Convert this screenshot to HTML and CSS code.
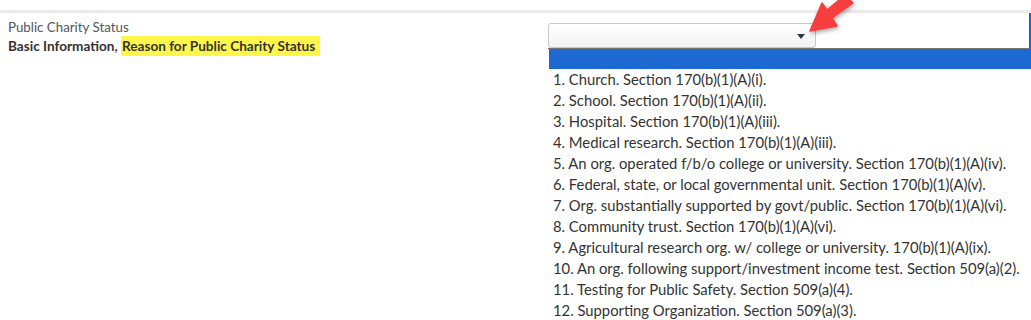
FILE: index.html
```html
<!DOCTYPE html>
<html lang="en">
<head>
    <meta charset="UTF-8">
    <title>Public Charity Status</title>
    <link rel="stylesheet" href="styles.css">
</head>
<body>
    <div class="topbar"></div>
    <div class="field">
        <div class="label">
            <div class="name">Public Charity Status</div>
            <div class="path">Basic Information, <span class="hl">Reason for Public Charity Status</span></div>
        </div>
        <div class="control">
            <div class="select"><span class="caret"></span></div>
            <svg class="pointer" width="60" height="45" viewBox="0 0 60 45">
                <path d="M10 31 L22 3 L27 10 L45 -5 L53 3 L32 18 L37 26 Z" fill="#f73e3e" stroke="#f73e3e" stroke-width="1.5" stroke-linejoin="round"/>
            </svg>
        </div>
    </div>
    <div class="dropdown">
        <div class="selected"></div>
        <ul class="options">
            <li>1. Church. Section 170(b)(1)(A)(i).</li>
            <li>2. School. Section 170(b)(1)(A)(ii).</li>
            <li>3. Hospital. Section 170(b)(1)(A)(iii).</li>
            <li>4. Medical research. Section 170(b)(1)(A)(iii).</li>
            <li>5. An org. operated f/b/o college or university. Section 170(b)(1)(A)(iv).</li>
            <li>6. Federal, state, or local governmental unit. Section 170(b)(1)(A)(v).</li>
            <li>7. Org. substantially supported by govt/public. Section 170(b)(1)(A)(vi).</li>
            <li>8. Community trust. Section 170(b)(1)(A)(vi).</li>
            <li>9. Agricultural research org. w/ college or university. 170(b)(1)(A)(ix).</li>
            <li>10. An org. following support/investment income test. Section 509(a)(2).</li>
            <li>11. Testing for Public Safety. Section 509(a)(4).</li>
            <li>12. Supporting Organization. Section 509(a)(3).</li>
        </ul>
    </div>
</body>
</html>
```
FILE: styles.css
```css
body {
    margin: 0;
    font-family: "Source Sans Pro", Lato, "Open Sans", sans-serif;
    background-color: #fff;
    color: #333;
    overflow: hidden;
}
.topbar {
    height: 3px;
    margin-top: 10px;
    background-color: #ebebeb;
}
.field {
    display: flex;
    height: 36px;
}
.label {
    width: 540px;
    padding: 5px 0 0 8px;
    line-height: 19px;
}
.name {
    font-size: 13.3px;
    color: #555;
}
.path {
    font-size: 13.6px;
    font-weight: bold;
    color: #333;
}
.hl {
    background-color: #fff64a;
    padding: 2px 5px 2px 1px;
}
.control {
    position: relative;
    flex: 1;
    padding-top: 10px;
    border-right: 2px solid #1a5fd6;
    border-bottom: 1px solid #777;
}
.select {
    position: relative;
    width: 266px;
    height: 23px;
    border: 1px solid #c8c8c8;
    border-radius: 3px;
    background: linear-gradient(#fff, #f3f3f3);
}
.caret {
    position: absolute;
    right: 10px;
    top: 10px;
    border-left: 4px solid transparent;
    border-right: 4px solid transparent;
    border-top: 5px solid #2d3a4a;
}
.pointer {
    position: absolute;
    left: 252px;
    top: -13px;
    filter: drop-shadow(1px 2px 2px rgba(0, 0, 0, 0.35));
}
.dropdown {
    margin-left: 549px;
}
.selected {
    height: 20px;
    background-color: #1b69d1;
}
.options {
    list-style: none;
    margin: 0;
    padding: 0 0 0 4px;
    font-size: 14.8px;
    line-height: 21px;
    color: #333;
}
```
